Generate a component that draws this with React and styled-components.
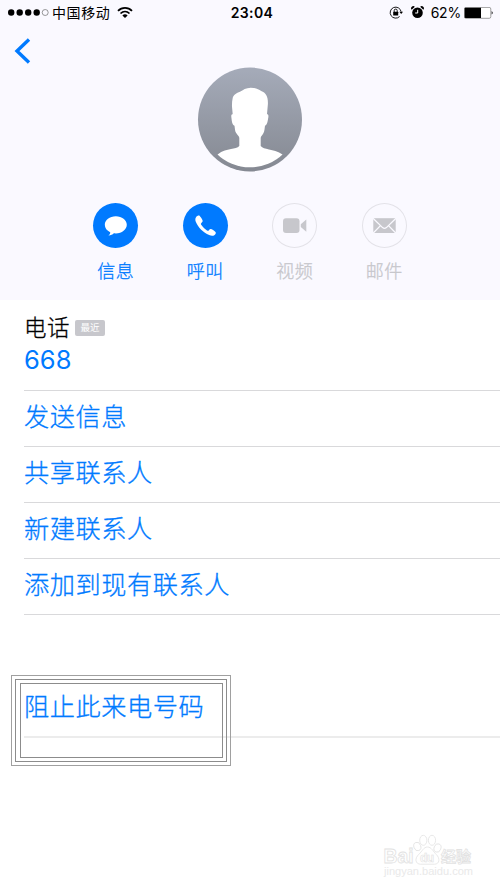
import styled, { createGlobalStyle } from "styled-components";

const GlobalStyle = createGlobalStyle`
  * {
    box-sizing: border-box;
  }

  body {
    margin: 0;
    background: #fff;
    font-family: Inter, "Noto Sans CJK SC", sans-serif;
  }
`;

const Screen = styled.main`
  position: relative;
  width: 500px;
  height: 889px;
  overflow: hidden;
  background: #fff;
`;

const Header = styled.header`
  height: 300px;
  background: #faf9ff;
`;

const StatusBar = styled.div`
  display: grid;
  grid-template-columns: 1fr auto 1fr;
  align-items: center;
  height: 25px;
  padding: 0 6px 0 7px;
  color: #000;
  font-size: 14px;
  line-height: 20px;

  svg {
    display: block;
  }
`;

const Carrier = styled.div`
  display: flex;
  align-items: center;

  span {
    margin: 0 7px 0 3px;
    font-size: 14px;
    letter-spacing: 0.6px;
  }
`;

const Time = styled.div`
  padding-left: 3px;
  font-weight: 600;
  letter-spacing: 0.4px;
`;

const Indicators = styled.div`
  display: flex;
  align-items: center;
  justify-content: flex-end;

  span {
    margin: 0 3px 0 7px;
    letter-spacing: -0.2px;
  }
`;

const Spacer = styled.div`
  width: 8px;
`;

const NavBar = styled.nav`
  height: 42px;
  padding: 12px 0 0 14px;

  svg {
    display: block;
  }
`;

const Avatar = styled.svg`
  display: block;
  width: 106px;
  height: 106px;
  margin: 0 auto;
`;

const Actions = styled.div`
  display: flex;
  width: 358px;
  margin: 29px 0 0 71px;
`;

const Action = styled.div`
  display: flex;
  flex: 1;
  flex-direction: column;
  align-items: center;
  color: ${(props) => (props.$disabled ? "#c7c7cc" : "#007aff")};
  font-size: 18px;
  line-height: 26px;

  span {
    margin-top: 11px;
    font-weight: 300;
    letter-spacing: 0.4px;
    -webkit-text-stroke: 0.3px currentColor;
  }
`;

const Circle = styled.div`
  width: 45px;
  height: 45px;
  margin-top: 1px;
  border-radius: 50%;
  background: ${(props) => (props.$disabled ? "transparent" : "#007aff")};
  box-shadow: ${(props) => (props.$disabled ? "inset 0 0 0 1px #e3e2e8" : "none")};

  svg {
    display: block;
  }
`;

const PhoneRow = styled.section`
  height: 91px;
  margin-left: 24px;
  padding-top: 10px;
  border-bottom: 1px solid #d9d9db;
`;

const PhoneLabel = styled.div`
  display: flex;
  align-items: center;
  height: 32px;
  color: #000;
  font-size: 22.5px;
  font-weight: 300;
  letter-spacing: 0.5px;
  -webkit-text-stroke: 0.3px currentColor;
`;

const Badge = styled.span`
  width: 30px;
  height: 16px;
  margin: 4px 0 0 5px;
  border-radius: 2px;
  background: #c7c7cc;
  color: #fff;
  font-size: 9.5px;
  font-weight: 400;
  letter-spacing: 0;
  line-height: 16px;
  text-align: center;
  -webkit-text-stroke: 0;
`;

const Number = styled.div`
  color: #007aff;
  font-size: 25.5px;
  font-weight: 370;
  letter-spacing: 0;
  line-height: 36px;
`;

const Row = styled.div`
  position: relative;
  height: 56px;
  margin-left: 24px;
  border-bottom: 1px solid #d9d9db;
  color: #007aff;
  font-size: 25.2px;
  font-weight: 300;
  letter-spacing: 0.57px;
  line-height: 52px;
  -webkit-text-stroke: 0.3px currentColor;
`;

const BlockRow = styled(Row)`
  height: 57px;
  margin-top: 66px;
  border-bottom: 2px solid #ececec;
`;

const Highlight = styled.div`
  position: absolute;
  top: -6px;
  left: -13px;
  width: 220px;
  height: 91px;
  padding: 3px;
  border: 1px solid #a0a0a0;

  div {
    height: 100%;
    padding: 3px 3px 3px 4px;
    border: 1px solid #8c8c8c;
  }
`;

const Watermark = styled.svg`
  position: absolute;
  left: 380px;
  top: 830px;
`;

const signalDots = [0, 1, 2, 3, 4];

function Signal() {
  return (
    <svg width="42" height="10" viewBox="0 0 42 10">
      {signalDots.map((dot) => (
        <circle
          key={dot}
          cx={4.2 + dot * 8.5}
          cy="4.5"
          r={dot === 4 ? 3 : 3.2}
          fill={dot === 4 ? "none" : "#000"}
          stroke={dot === 4 ? "#555" : "none"}
          strokeWidth="0.6"
        />
      ))}
    </svg>
  );
}

function Wifi() {
  return (
    <svg width="16" height="12" viewBox="0 0 16 12" fill="none" stroke="#000">
      <path d="M1 3.9C5-.1 11-.1 15 3.9" strokeWidth="1.8" />
      <path d="M3.5 6.5C6.1 3.9 9.9 3.9 12.5 6.5" strokeWidth="1.7" />
      <path d="M5.4 8.4C6.9 7 9.1 7 10.6 8.4L8 11Z" fill="#000" stroke="none" />
    </svg>
  );
}

function RotationLock() {
  return (
    <svg width="14" height="14" viewBox="0 0 14 14">
      <path
        d="M12.1 5.700A5.500 5.500 0 1 0 10.600 10.500"
        fill="none"
        stroke="#000"
        strokeWidth="0.9"
      />
      <path d="M10.400 5.700H14L12.200 8Z" />
      <rect x="4.200" y="5.800" width="5" height="3.800" rx="0.4" />
      <path d="M5.200 6V4.600a1.500 1.500 0 0 1 3 0V6" fill="none" stroke="#000" strokeWidth="0.9" />
    </svg>
  );
}

function Alarm() {
  return (
    <svg width="13" height="13" viewBox="0 0 13 13">
      <circle cx="6.5" cy="6.7" r="5.3" />
      <path d="M.7 3.7A2 2 0 0 1 3.8.8ZM12.3 3.7A2 2 0 0 0 9.2.8Z" />
      <path d="M6.7 3.8V7H4.2" fill="none" stroke="#fff" strokeWidth="1" />
    </svg>
  );
}

function Battery() {
  return (
    <svg width="30" height="12" viewBox="0 0 30 12">
      <rect x=".3" y=".4" width="26.5" height="10.9" rx="1.6" fill="#fff" stroke="#777" strokeWidth="0.7" />
      <path d="M1.600.8H17v10.100H1.600a1 1 0 0 1-1-1V1.800a1 1 0 0 1 1-1Z" />
      <path d="M27.700 4q2 1.800 0 3.600Z" />
    </svg>
  );
}

function BubbleIcon() {
  return (
    <svg width="45" height="45" viewBox="0 0 45 45" fill="#fff">
      <path d="M22.8 13.2c-6.1 0-11 3.8-11 8.6 0 3.3 2.1 5.9 5.4 7.4.2 1.4-.6 2.5-1.9 3.3 2.2.1 4.3-.8 5.5-2.2.6.1 1.3.1 2 .1 6.1 0 11-3.8 11-8.6s-4.9-8.6-11-8.6Z" />
    </svg>
  );
}

function PhoneIcon() {
  return (
    <svg width="45" height="45" viewBox="0 0 45 45" fill="#fff">
      <path d="M13.2 13.9c1-1.2 2.5-1.9 3.4-1.1.9.9 2.3 3.1 2.9 4.5.5 1.2-.2 1.8-1.1 2.6-.7.6-.6 1.2 0 2 1.5 2.1 3.4 4 5.6 5.5.8.5 1.3.6 1.9-.1.8-1 1.5-1.6 2.7-1 1.5.7 3 1.7 3.9 2.6.8.9 0 2.5-1.2 3.3-1.3.9-3.1.8-5.2-.1-5.7-2.4-10.9-7.7-13.2-13.1-.8-2-.8-3.8.3-5.1Z" />
    </svg>
  );
}

function VideoIcon() {
  return (
    <svg width="45" height="45" viewBox="0 0 45 45" fill="#c7c7cc">
      <rect x="11" y="15.2" width="16.5" height="14.8" rx="3" />
      <path d="M28.8 21.3 34.3 16.5V28.7L28.8 23.9Z" />
    </svg>
  );
}

function MailIcon() {
  return (
    <svg width="45" height="45" viewBox="0 0 45 45">
      <rect x="11.3" y="15.2" width="22.4" height="14.8" fill="#c7c7cc" />
      <path
        d="M11 15.3 20.6 24.6Q22.5 26.2 24.4 24.6L34 15.3M11 30.2 18.5 22.6M34 30.2 26.5 22.6"
        fill="none"
        stroke="#faf9ff"
        strokeWidth="1.3"
      />
    </svg>
  );
}

const actions = [
  { label: "信息", icon: <BubbleIcon /> },
  { label: "呼叫", icon: <PhoneIcon /> },
  { label: "视频", icon: <VideoIcon />, disabled: true },
  { label: "邮件", icon: <MailIcon />, disabled: true },
];

const rows = ["发送信息", "共享联系人", "新建联系人", "添加到现有联系人"];

function App() {
  return (
    <Screen>
      <GlobalStyle />
      <Header>
        <StatusBar>
          <Carrier>
            <Signal />
            <span>中国移动</span>
            <Wifi />
          </Carrier>
          <Time>23:04</Time>
          <Indicators>
            <RotationLock />
            <Spacer />
            <Alarm />
            <span>62%</span>
            <Battery />
          </Indicators>
        </StatusBar>
        <NavBar>
          <svg width="18" height="28" viewBox="0 0 18 28">
            <path d="M15 2.6 3 14 15 25.4" fill="none" stroke="#007aff" strokeWidth="3.4" />
          </svg>
        </NavBar>
        <Avatar viewBox="0 0 106 106">
          <defs>
            <linearGradient id="avatarFill" x2="0" y2="1">
              <stop stopColor="#a5abb9" />
              <stop offset="1" stopColor="#858992" />
            </linearGradient>
            <clipPath id="bust">
              <circle cx="53" cy="52.8" r="47.5" />
            </clipPath>
          </defs>
          <circle cx="53" cy="52.5" r="52" fill="url(#avatarFill)" />
          <path
            fill="#fff"
            d="M53.7 20.7C49 20.7 46 23 43 24.7C39.5 25.8 36.3 28 35.7 31C35 34 34.9 37 35 39.7L35.7 47.3C34.3 47.3 34.1 48.5 34.4 50.5C34.8 53.5 35 58 37.5 58.7C37.9 61.5 38 64.5 39.2 66C40.5 68 42.3 69.5 42.3 71V79C40.5 81 37.5 81.5 34 82C28 83.2 23.5 84.5 19 89V106H87V89C83 85 78 84 72 82.6C68 81.5 65.5 81 63.7 79V71C63.7 69.5 65.5 68 66.5 66C67.5 64 67.6 61.5 68 58.7C70.4 57.8 70.7 53.5 71.3 50.5C71.6 48.5 71.4 47.3 70 47.3L70.9 37C71 33.5 70.8 30 68.5 27C67 25 65.5 24.6 64.2 24C61.5 22 58.5 20.7 53.7 20.7Z"
            clipPath="url(#bust)"
          />
        </Avatar>
        <Actions>
          {actions.map(({ label, icon, disabled }) => (
            <Action key={label} $disabled={disabled}>
              <Circle $disabled={disabled}>{icon}</Circle>
              <span>{label}</span>
            </Action>
          ))}
        </Actions>
      </Header>

      <PhoneRow>
        <PhoneLabel>
          电话<Badge>最近</Badge>
        </PhoneLabel>
        <Number>668</Number>
      </PhoneRow>
      {rows.map((row) => (
        <Row key={row}>{row}</Row>
      ))}
      <BlockRow>
        阻止此来电号码
        <Highlight>
          <div>
            <div />
          </div>
        </Highlight>
      </BlockRow>

      <Watermark width="116" height="54" viewBox="0 0 116 54">
        <g fill="#fff" stroke="#e2e2e2" strokeWidth="0.8">
          <ellipse cx="37.3" cy="16.5" rx="3.4" ry="4.3" transform="rotate(-20 37.3 16.5)" />
          <ellipse cx="43.3" cy="10.3" rx="3.6" ry="5" />
          <ellipse cx="52" cy="10.3" rx="3.6" ry="5" />
          <ellipse cx="57.5" cy="18" rx="3.4" ry="4.3" transform="rotate(20 57.5 18)" />
          <path d="M47.5 17c-4 0-5.500 4.500-8.500 7.200-5 4.400-3.300 10 1.500 10h14c5 0 6-5.700 1.700-9.800C53.300 21.700 51.500 17 47.500 17Z" />
          <g fontFamily="Liberation Sans, sans-serif" fontWeight="700">
            <text x="3.5" y="33.3" fontSize="19.5" textLength="30" lengthAdjust="spacingAndGlyphs">Bai</text>
            <text x="40" y="32" fontSize="12" textLength="14" strokeWidth="0.6">du</text>
          </g>
          <text x="61" y="32.3" fontSize="15" fontWeight="700" fontFamily="Noto Sans CJK SC, sans-serif">经验</text>
          <text
            x="4"
            y="45.3"
            fontSize="10"
            textLength="89"
            lengthAdjust="spacingAndGlyphs"
            fill="#e9e9e9"
            stroke="none"
            fontFamily="Liberation Sans, sans-serif"
          >
            jingyan.baidu.com
          </text>
        </g>
      </Watermark>
    </Screen>
  );
}

export default App;
